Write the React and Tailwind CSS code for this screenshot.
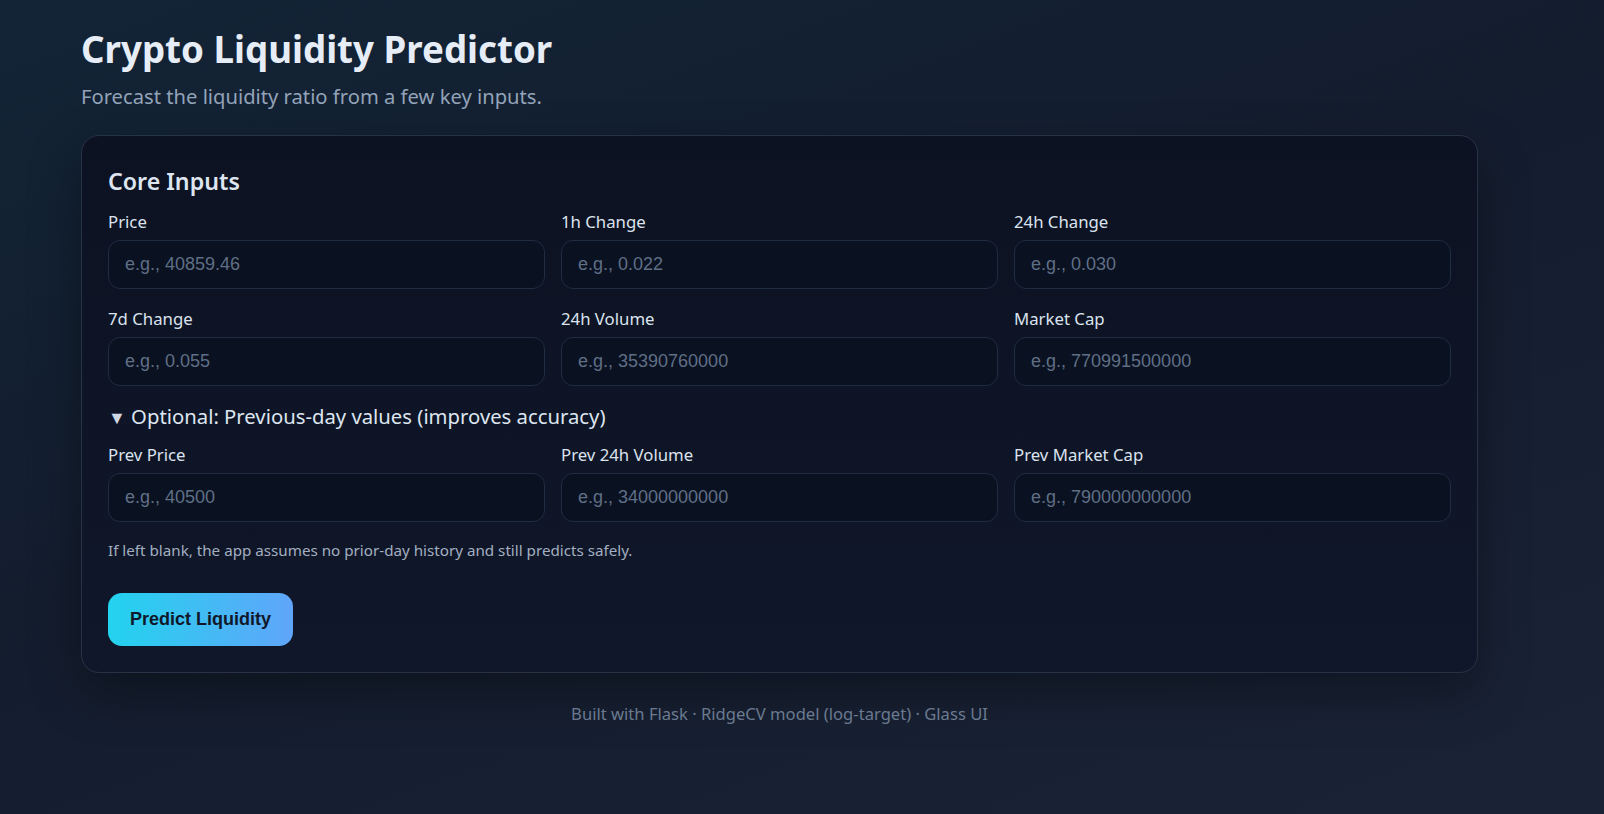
const coreFields = [
  { label: 'Price', placeholder: 'e.g., 40859.46' },
  { label: '1h Change', placeholder: 'e.g., 0.022' },
  { label: '24h Change', placeholder: 'e.g., 0.030' },
  { label: '7d Change', placeholder: 'e.g., 0.055' },
  { label: '24h Volume', placeholder: 'e.g., 35390760000' },
  { label: 'Market Cap', placeholder: 'e.g., 770991500000' },
];

const prevFields = [
  { label: 'Prev Price', placeholder: 'e.g., 40500' },
  { label: 'Prev 24h Volume', placeholder: 'e.g., 34000000000' },
  { label: 'Prev Market Cap', placeholder: 'e.g., 790000000000' },
];

function Field({ label, placeholder }) {
  return (
    <label className="flex flex-col">
      <span className="text-[16.75px] leading-[24px] text-[#dbe3ee] mb-[6px]">{label}</span>
      <input
        type="text"
        placeholder={placeholder}
        className="h-[49px] w-full rounded-[12px] border border-[#1f2c42] bg-[#0a1120] px-[16px] text-[18px] text-[#e2e8f0] placeholder:text-[#5f6f86] outline-none"
        style={{ fontFamily: '"Liberation Sans", Arial, sans-serif' }}
      />
    </label>
  );
}

export default function App() {
  return (
    <div
      className="min-h-screen w-full bg-[linear-gradient(160deg,#122436_0%,#141d2e_45%,#1a2336_100%)] pl-[81px] pt-[27px] pb-[60px]"
      style={{ fontFamily: '"Noto Sans", "Open Sans", sans-serif' }}
    >
      <div className="w-[1397px]">
        <h1 className="text-[36.7px] leading-[44px] font-bold text-[#e6edf6]">Crypto Liquidity Predictor</h1>
        <p className="mt-[11px] text-[20.2px] leading-[28px] text-[#93a3b8]">
          Forecast the liquidity ratio from a few key inputs.
        </p>

        <div className="mt-[25px] rounded-[18px] border border-[#283245] bg-[linear-gradient(180deg,#0c1221_0%,#10172a_100%)] p-[26px] shadow-[0_20px_50px_rgba(0,0,0,0.35)]">
          <h2 className="mt-[4px] text-[23.2px] leading-[30px] font-semibold text-[#dde5f0]">Core Inputs</h2>
          <div className="mt-[14px] grid grid-cols-3 gap-x-[16px] gap-y-[18px]">
            {coreFields.map((f) => (
              <Field key={f.label} {...f} />
            ))}
          </div>

          <details open className="mt-[16px]">
            <summary className="cursor-pointer text-[20.3px] leading-[28px] text-[#dde5f0] list-none">
              <span className="text-[18px] text-[#cfd8e4]">▼</span> Optional: Previous-day values (improves accuracy)
            </summary>
            <div className="mt-[12px] grid grid-cols-3 gap-x-[16px]">
              {prevFields.map((f) => (
                <Field key={f.label} {...f} />
              ))}
            </div>
          </details>

          <p className="mt-[18px] text-[15.2px] leading-[20px] text-[#a3afc0]">
            If left blank, the app assumes no prior-day history and still predicts safely.
          </p>

          <button
            type="button"
            className="mt-[33px] h-[53px] rounded-[14px] bg-[linear-gradient(90deg,#22d3ee,#60a5fa)] px-[22px] text-[18px] font-bold text-[#0f172a]"
            style={{ fontFamily: '"Liberation Sans", Arial, sans-serif' }}
          >
            Predict Liquidity
          </button>
        </div>

        <p className="mt-[29px] text-center text-[16.6px] leading-[24px] text-[#6b7a90]">
          Built with Flask · RidgeCV model (log-target) · Glass UI
        </p>
      </div>
    </div>
  );
}
